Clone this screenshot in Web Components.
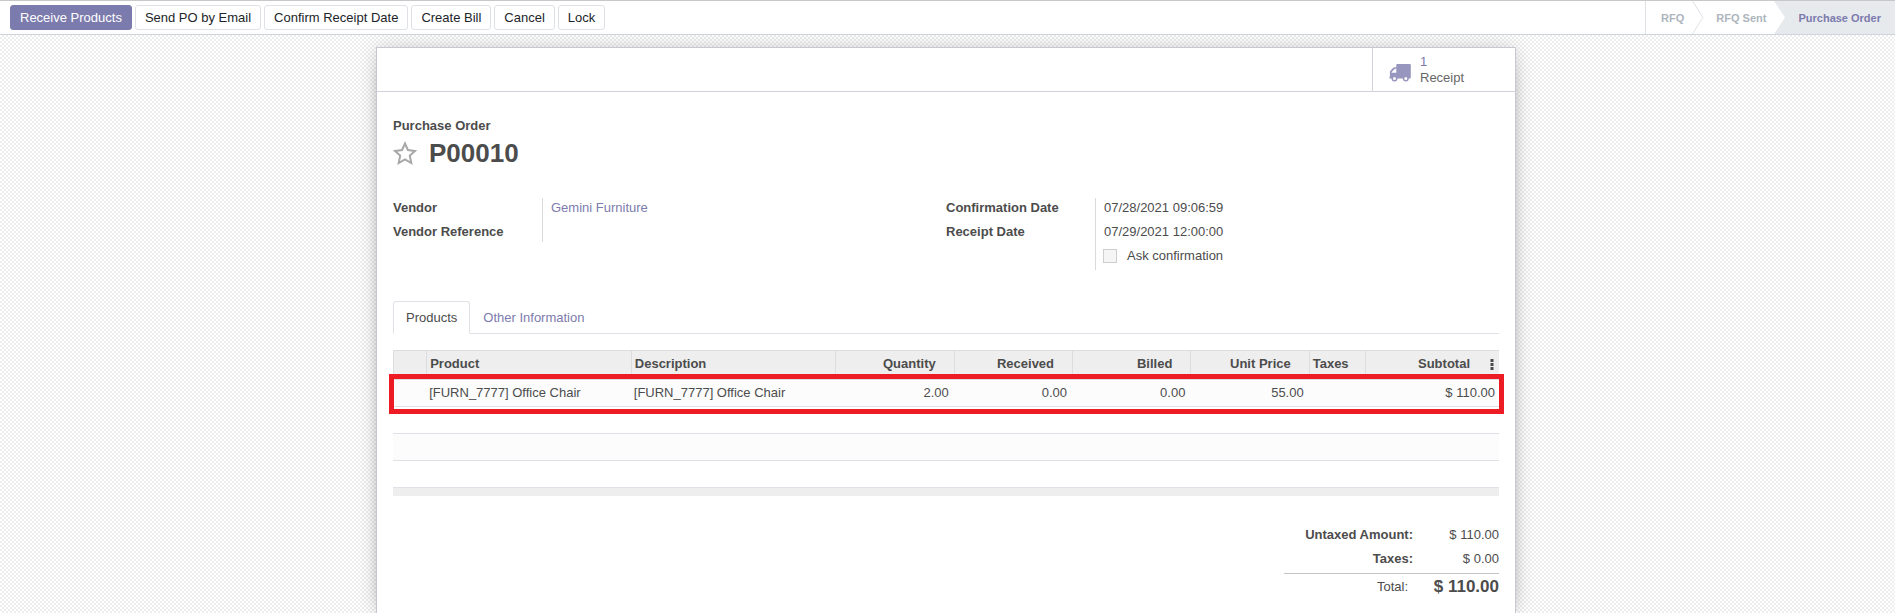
<!DOCTYPE html>
<html lang="en">
<head>
<meta charset="utf-8">
<title>Purchase Order P00010</title>
<style>
body {
  margin: 0; min-height: 100vh; display: flex; flex-direction: column;
  font: 13px/20px "Liberation Sans", Arial, sans-serif; color: #4c4c4c;
  --brand: #7c7bad; --line: #dee2e6; --sheet-line: #c8c8d3;
}
po-canvas { flex: 1; }
</style>
</head>
<body>
<po-toolbar>
  <po-button primary>Receive Products</po-button>
  <po-button>Send PO by Email</po-button>
  <po-button>Confirm Receipt Date</po-button>
  <po-button>Create Bill</po-button>
  <po-button>Cancel</po-button>
  <po-button>Lock</po-button>
  <po-status slot="status"></po-status>
</po-toolbar>
<po-canvas>
  <po-sheet>
    <po-stat slot="stats" value="1">Receipt</po-stat>
    <po-title label="Purchase Order">P00010</po-title>
    <po-groups></po-groups>
    <po-tabs></po-tabs>
    <po-lines></po-lines>
    <po-totals></po-totals>
  </po-sheet>
</po-canvas>
<script>
const define = (name, render) => customElements.define(name, class extends HTMLElement {
  constructor() {
    super();
    this.attachShadow({ mode: "open" }).innerHTML =
      "<style>*{box-sizing:border-box}</style>" + render(this);
  }
});

define("po-toolbar", () => `
<style>
:host { display: flex; justify-content: space-between; box-sizing: border-box; height: 35px; background: #fff;
  border-top: 1px solid #c8c8c8; border-bottom: 1px solid #cfd4dc; }
.actions { display: flex; gap: 3px; padding: 4px 0 4px 10px; }
</style>
<div class="actions"><slot></slot></div><slot name="status"></slot>`);

define("po-button", () => `
<style>
:host { display: flex; }
button { font: inherit; line-height: 18px; color: #212529; background: #fff; border: 1px solid var(--line);
  border-radius: 3px; padding: 0 9px; white-space: nowrap; }
:host([primary]) button { color: #fff; background: var(--brand); border-color: var(--brand); }
</style>
<button type="button"><slot></slot></button>`);

define("po-status", () => `
<style>
:host { display: flex; font-size: 11px; font-weight: bold; border-left: 1px solid var(--line); }
button { font: inherit; line-height: 18px; border: 0; background: none; color: #adb5bd; padding: 0; white-space: nowrap; }
.step { display: flex; align-items: center; padding: 0 8px 0 15px; }
.step + svg + .step { padding-left: 12px; }
.step.current { background: #e7eaed; padding-right: 14px; }
.current button { color: var(--brand); }
svg { display: block; flex: none; width: 12px; height: 33px; }
</style>
<div class="step"><button type="button">RFQ</button></div>
<svg viewBox="0 0 12 33"><path d="M.5 0 11 16.5.5 33" fill="none" stroke="#dee2e6"/></svg>
<div class="step"><button type="button">RFQ Sent</button></div>
<svg viewBox="0 0 12 33"><path d="M0 0H12V33H0L11 16.5z" fill="#e7eaed"/></svg>
<div class="step current"><button type="button" aria-current="step">Purchase Order</button></div>`);

define("po-canvas", () => `
<style>
:host { display: flex; justify-content: center; padding: 12px 3px 0 0; overflow: hidden;
  background: repeating-conic-gradient(#eee 0 25%, #fff 0 50%) 0 0 / 4px 4px; }
</style>
<slot></slot>`);

define("po-sheet", () => `
<style>
:host { display: block; box-sizing: border-box; flex: 0 1 1140px; background: #fff;
  border: 1px solid var(--sheet-line); border-bottom: 0; box-shadow: 0 5px 20px -15px #000, 0 0 20px rgba(0,0,0,.14); }
.stats { display: flex; justify-content: flex-end; height: 44px; border-bottom: 1px solid #d0d3da; }
.body { padding: 24px 16px 0; }
</style>
<div class="stats"><slot name="stats"></slot></div>
<div class="body"><slot></slot></div>`);

define("po-stat", el => `
<style>
:host { display: flex; width: 142px; border-left: 1px solid #d0d3da; }
button { flex: 1; display: flex; align-items: center; gap: 9px; font: inherit; line-height: 16px; text-align: left;
  color: #666; background: none; border: 0; padding: 1px 0 0 16px; }
svg { width: 22px; height: 18px; margin-top: 6px; fill: #9796be; }
b { display: block; font-weight: normal; color: #7c7bad; }
</style>
<button type="button">
<svg viewBox="0 0 22 18" aria-hidden="true"><path fill-rule="evenodd" d="M8.300 0H20.800a1 1 0 0 1 1 1V13.500a1 1 0 0 1-1 1H19.800a3 3 0 0 1-6 0H8.500a3 3 0 0 1-6 0H1a.8.8 0 0 1-.8-1c.7-.5.7-.6.7-1.500V8.200c0-.7.2-1.200.7-1.700L4 4c.5-.5 1-.7 1.700-.7H7.300V1a1 1 0 0 1 1-1zM5.900 4.800 2.500 8.200V8.700H7.300V4.800zM5.500 13a1.500 1.500 0 1 0 0 3 1.500 1.500 0 0 0 0-3zM16.800 13a1.500 1.500 0 1 0 0 3 1.500 1.500 0 0 0 0-3z"/></svg>
<span><b>${el.getAttribute("value")}</b><slot></slot></span></button>`);

define("po-title", el => `
<style>
:host { display: block; }
p { margin: 0; font-weight: bold; }
.row { display: flex; align-items: center; gap: 12px; height: 34px; }
h1 { margin: 0; font-size: 26px; line-height: 34px; }
button { display: flex; padding: 0; border: 0; background: none; }
svg { width: 24px; height: 24px; fill: none; stroke: #a8a8a8; stroke-width: 2; stroke-linejoin: miter; }
</style>
<p>${el.getAttribute("label")}</p>
<div class="row"><button type="button" aria-label="Priority">
<svg viewBox="0 0 24 24"><path d="M12 2.500 14.900 9 22 9.900 16.800 14.600 18.300 22 12 18.500 5.700 22 7.200 14.600 2 9.900 9.100 9z"/></svg>
</button><h1><slot></slot></h1></div>`);

define("po-groups", () => `
<style>
:host { display: grid; grid-template-columns: 1fr 1fr; align-items: start; margin-top: 28px; }
dl { margin: 0; display: grid; grid-template-columns: 149px 1fr; }
dt, dd { margin: 0; height: 24px; line-height: 20px; }
dt { font-weight: bold; }
dd { border-left: 1px solid #d9d9d9; padding-left: 8px; }
a { color: var(--brand); text-decoration: none; }
label { display: flex; align-items: center; gap: 10px; }
input { appearance: none; width: 14px; height: 14px; margin: 0; background: #f5f5f5; border: 1px solid #cfcfcf; }
dt.last, dd.last { height: 20px; }
.check { padding-left: 7px; }
</style>
<dl><dt>Vendor</dt><dd><a href="#vendor">Gemini Furniture</a></dd><dt class="last">Vendor Reference</dt><dd class="last"></dd></dl>
<dl><dt>Confirmation Date</dt><dd>07/28/2021 09:06:59</dd><dt>Receipt Date</dt><dd>07/29/2021 12:00:00</dd>
<dt></dt><dd class="check"><label><input type="checkbox" disabled>Ask confirmation</label></dd></dl>`);

define("po-tabs", () => `
<style>
:host { display: flex; margin-top: 31px; border-bottom: 1px solid var(--line); height: 33px; box-sizing: border-box; }
a { height: 33px; padding: 6px 12px; line-height: 20px; color: var(--brand); text-decoration: none;
  border: 1px solid transparent; border-radius: 3px 3px 0 0; }
.on { color: #4c4c4c; background: #fff; border-color: var(--line) var(--line) #fff; }
</style>
<a class="on" href="#products" aria-current="page">Products</a><a href="#other">Other Information</a>`);

define("po-lines", () => `
<style>
:host { display: block; position: relative; margin-top: 16px; }
table { width: 100%; table-layout: fixed; border-collapse: separate; border-spacing: 0; }
th, td { padding: 0 5px 0 3px; text-align: left; white-space: nowrap; }
th { height: 30px; padding-bottom: 2px; background: #eee; border: solid #dcdde0; border-width: 1px 0 1px 1px; }
th:last-child { border-left: 0; padding: 0 0 2px; }
td { height: 27px; border-bottom: 1px solid var(--line); }
.n { text-align: right; }
th.n { padding-right: 18px; }
th.sub { padding-right: 4px; }
td.sub { padding-right: 4px; }
tbody tr:nth-child(odd) { background: #fcfcfc; }
tfoot td { height: 8px; background: #eee; border: 0; }
button { display: block; border: 0; padding: 0; margin: 0 0 0 16px; background: none; }
svg { display: block; fill: #4c4c4c; }
.mark { position: absolute; top: 24px; left: -4px; right: -5px; height: 40px; border: 5px solid #ed1c24; pointer-events: none; }
</style>
<table>
<colgroup><col style="width:3%"><col style="width:18.5%"><col style="width:18.5%"><col style="width:10.7%"><col style="width:10.7%"><col style="width:10.7%"><col style="width:10.7%"><col style="width:5.1%"><col><col style="width:25px"></colgroup>
<thead><tr><th></th><th>Product</th><th>Description</th><th class="n">Quantity</th><th class="n">Received</th><th class="n">Billed</th><th class="n">Unit Price</th><th>Taxes</th><th class="n sub">Subtotal</th>
<th><button type="button" aria-label="Optional columns"><svg width="4" height="11" viewBox="0 0 4 11"><path d="M.5 0h3v3h-3zM.5 4h3v3h-3zM.5 8h3v3h-3z"/></svg></button></th></tr></thead>
<tbody>
<tr><td></td><td>[FURN_7777] Office Chair</td><td>[FURN_7777] Office Chair</td><td class="n">2.00</td><td class="n">0.00</td><td class="n">0.00</td><td class="n">55.00</td><td></td><td class="n sub" colspan="2">$ 110.00</td></tr>
<tr><td colspan="10"></td></tr><tr><td colspan="10"></td></tr><tr><td colspan="10"></td></tr>
</tbody>
<tfoot><tr><td colspan="10"></td></tr></tfoot>
</table>
<div class="mark"></div>`);

define("po-totals", () => `
<style>
:host { display: flex; justify-content: flex-end; margin-top: 27px; }
table { width: 215px; border-spacing: 0; }
th, td { height: 24px; padding: 0; text-align: right; white-space: nowrap; }
th { width: 129px; }
.taxes th, .taxes td { height: 26px; padding-bottom: 2px; }
.total th, .total td { height: 27px; border-top: 1px solid #c4c4c4; }
.total th { font-weight: normal; padding-right: 5px; }
.total td { font-size: 17px; font-weight: bold; }
</style>
<table>
<tr><th scope="row">Untaxed Amount:</th><td>$ 110.00</td></tr>
<tr class="taxes"><th scope="row">Taxes:</th><td>$ 0.00</td></tr>
<tr class="total"><th scope="row">Total:</th><td>$ 110.00</td></tr>
</table>`);
</script>
</body>
</html>
